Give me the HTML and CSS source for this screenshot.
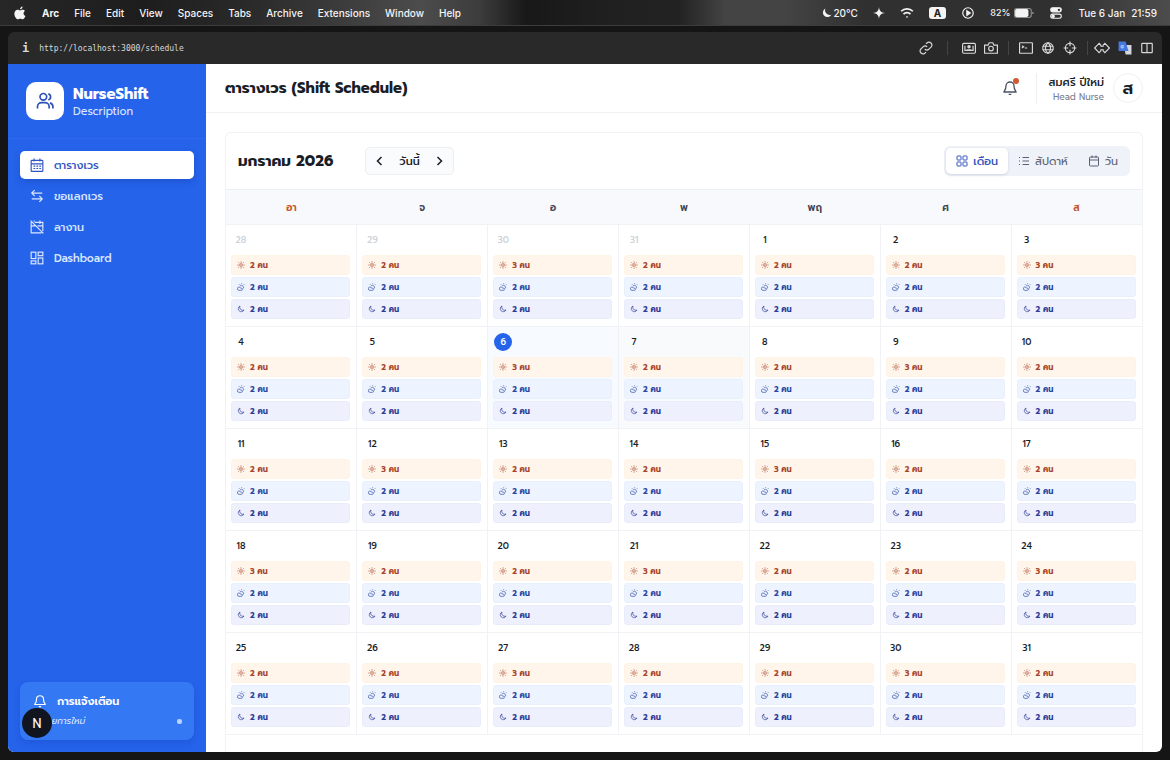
FILE: index.html
```
<!DOCTYPE html>
<html lang="th">
<head>
  <meta charset="UTF-8">
  <meta name="viewport" content="width=device-width, initial-scale=1.0">
  <title>NurseShift</title>
  <link rel="stylesheet" href="styles.css">
</head>
<body>
  <!-- icon set -->
  <svg class="sprite" aria-hidden="true">
    <symbol id="i-users" viewBox="0 0 24 24"><circle cx="10" cy="7" r="4"/><path d="M3 21v-2a5 5 0 0 1 5-5h4a5 5 0 0 1 5 5v2M16 3.2a4 4 0 0 1 0 7.6M21.500 21v-2a5 5 0 0 0-3.500-4.800"/></symbol>
    <symbol id="i-calendar" viewBox="0 0 24 24"><rect x="2" y="4" width="20" height="19" rx="1"/><path d="M2 10h20M7 1v5M17 1v5M6 14h3M11 14h3M16 14h3M6 18h3M11 18h3M16 18h3"/></symbol>
    <symbol id="i-swap" viewBox="0 0 24 24"><path d="M21 7H3M8 2L3 7l5 5M3 17h18M16 12l5 5-5 5"/></symbol>
    <symbol id="i-off" viewBox="0 0 24 24"><path d="M8 4h14v15M2 4v18h18M1 1l22 22M13 10h9M17 1v6M7 1v2M2 10h7"/></symbol>
    <symbol id="i-grid" viewBox="0 0 24 24"><rect x="2" y="2" width="8" height="8" rx="1"/><rect x="14" y="2" width="8" height="8" rx="1"/><rect x="2" y="14" width="8" height="8" rx="1"/><rect x="14" y="14" width="8" height="8" rx="1"/></symbol>
    <symbol id="i-dash" viewBox="0 0 24 24"><rect x="2" y="2" width="8" height="11"/><rect x="14" y="2" width="8" height="6"/><rect x="2" y="17" width="8" height="5"/><rect x="14" y="12" width="8" height="10"/></symbol>
    <symbol id="i-bell" viewBox="0 0 24 24"><path d="M6 9a6 6 0 0 1 12 0c0 6 3 7 3 9H3c0-2 3-3 3-9zM10 21.500h4"/></symbol>
    <symbol id="i-list" viewBox="0 0 24 24"><path d="M9 5h13M9 12h13M9 19h13M2 5h2M2 12h2M2 19h2"/></symbol>
    <symbol id="i-day" viewBox="0 0 24 24"><rect x="3" y="4" width="18" height="18" rx="2"/><path d="M3 10h18M8 1v5M16 1v5"/></symbol>
    <symbol id="i-left" viewBox="0 0 24 24"><path d="M15 4l-8 8 8 8"/></symbol>
    <symbol id="i-right" viewBox="0 0 24 24"><path d="M9 4l8 8-8 8"/></symbol>
    <symbol id="i-sun" viewBox="0 0 24 24"><circle cx="12" cy="12" r="4"/><path d="M12 1v4M12 19v4M1 12h4M19 12h4M4 4l3 3M17 17l3 3M4 20l3-3M17 7l3-3"/></symbol>
    <symbol id="i-cloud" viewBox="0 0 24 24"><path d="M6 22a5 5 0 1 1 4.800-6.500H13a3.200 3.200 0 0 1 0 6.500zM9 9a6 6 0 1 1 9 8M14 1v2M22 4l-2 2M6 4l2 2"/></symbol>
    <symbol id="i-moon" viewBox="0 0 24 24"><path d="M9 3a9 9 0 1 0 12 12A9 9 0 0 1 9 3z"/></symbol>
    <symbol id="i-apple" viewBox="0 0 24 24"><path d="M16.500 1c.1 2.600-2 4.800-4.400 4.700C11.900 3.300 14 1.200 16.500 1zM20.500 8.600c-3.600 2.200-3 7 .8 8.500-1 2.900-2.900 5.700-4.800 5.700-1.600 0-2.100-1-4-1s-2.500 1-4 1C5.300 22.800 2.200 17.200 2.400 12.900c.2-4 2.800-6.400 5.500-6.400 1.800 0 3.100 1.100 4.200 1.100 1 0 2.700-1.300 4.900-1.200 1.400.1 2.700.8 3.500 2.200z"/></symbol>
    <symbol id="i-spark" viewBox="0 0 24 24"><path d="M12 0c.8 8 4 11.200 12 12-8 .8-11.200 4-12 12-.8-8-4-11.200-12-12 8-.8 11.200-4 12-12z"/></symbol>
    <symbol id="i-wifi" viewBox="0 0 24 24"><path d="M2 9a14 14 0 0 1 20 0M6 14a8 8 0 0 1 12 0M11 18.500h2"/></symbol>
    <symbol id="i-play" viewBox="0 0 24 24"><circle cx="12" cy="12" r="9"/><path d="M10 8l6 4-6 4z" fill="currentColor"/></symbol>
    <symbol id="i-battery" viewBox="0 0 36 20"><rect x="1" y="2" width="30" height="16" rx="4" opacity=".5"/><rect x="2" y="3" width="24" height="14" rx="3" fill="currentColor" stroke="none"/><path d="M34 8v4" opacity=".6"/></symbol>
    <symbol id="i-control" viewBox="0 0 24 24"><rect x="3" y="3" width="18" height="7" rx="3" fill="currentColor"/><circle cx="17" cy="6.500" r="2" fill="#333" stroke="none"/><rect x="3" y="14" width="18" height="7" rx="3"/><circle cx="7" cy="17.500" r="2" fill="currentColor"/></symbol>
    <symbol id="i-link" viewBox="0 0 24 24"><path d="M10 14a5 5 0 0 0 7 0l4-4a5 5 0 0 0-7-7l-2 2M14 10a5 5 0 0 0-7 0l-4 4a5 5 0 0 0 7 7l2-2"/></symbol>
    <symbol id="i-card" viewBox="0 0 24 24"><rect x="1" y="4" width="22" height="17" rx="2"/><circle cx="12" cy="10" r="2" fill="currentColor"/><path d="M5 8v8h14V8M8 15h8"/></symbol>
    <symbol id="i-camera" viewBox="0 0 24 24"><path d="M1 7h6l2-4h6l2 4h6v14H1z"/><circle cx="12" cy="13" r="4"/></symbol>
    <symbol id="i-term" viewBox="0 0 24 24"><rect x="1" y="3" width="22" height="18" rx="1"/><path d="M5 8l3 2-3 2M10 12h4"/></symbol>
    <symbol id="i-globe" viewBox="0 0 24 24"><circle cx="12" cy="12" r="9"/><path d="M3 9h18M3 15h18M12 3c-6 5-6 13 0 18M12 3c6 5 6 13 0 18"/></symbol>
    <symbol id="i-target" viewBox="0 0 24 24"><circle cx="12" cy="12" r="8"/><path d="M12 1v8M12 15v8M1 12h8M15 12h8"/></symbol>
    <symbol id="i-code" viewBox="0 0 28 24"><path d="M9 4l-8 8 8 8 3-3v-2h4v2l3 3 8-8-8-8-3 3v2h-4V7z"/></symbol>
    <symbol id="i-split" viewBox="0 0 24 24"><rect x="3" y="4" width="18" height="16" rx="1"/><path d="M12 4v16"/></symbol>
    <symbol id="i-translate" viewBox="0 0 24 24"><path d="M10 7h13v16H13z" fill="#d5d8df" stroke="none"/><path d="M1 1h12l5 16H1z" fill="#4679df" stroke="none"/><path d="M10 8H7a2 2 0 1 0 2 3H7" stroke="#a9c4ff"/></symbol>
  </svg>

  <div class="menubar">
    <svg class="icon solid"><use href="#i-apple"/></svg>
    <b>Arc</b>
    <span>File</span>
    <span>Edit</span>
    <span>View</span>
    <span>Spaces</span>
    <span>Tabs</span>
    <span>Archive</span>
    <span>Extensions</span>
    <span>Window</span>
    <span>Help</span>
    <div class="status">
      <span class="weather"><svg class="icon small solid"><use href="#i-moon"/></svg>20°C</span>
      <svg class="icon small solid"><use href="#i-spark"/></svg>
      <svg class="icon thick"><use href="#i-wifi"/></svg>
      <span class="lang">A</span>
      <svg class="icon"><use href="#i-play"/></svg>
      <span class="power">82%<svg class="icon wide"><use href="#i-battery"/></svg></span>
      <svg class="icon"><use href="#i-control"/></svg>
      <span class="clock"><span>Tue 6 Jan</span><span>21:59</span></span>
    </div>
  </div>

  <div class="window">
    <div class="toolbar">
      <b class="info">i</b>
      <span class="url">http://localhost:3000/schedule</span>
      <div class="tools">
        <div class="tool-group"><svg class="icon"><use href="#i-link"/></svg></div>
        <div class="tool-group"><svg class="icon"><use href="#i-card"/></svg><svg class="icon"><use href="#i-camera"/></svg></div>
        <div class="tool-group"><svg class="icon"><use href="#i-term"/></svg><svg class="icon"><use href="#i-globe"/></svg><svg class="icon"><use href="#i-target"/></svg></div>
        <div class="tool-group"><svg class="icon code"><use href="#i-code"/></svg><svg class="icon"><use href="#i-translate"/></svg><svg class="icon"><use href="#i-split"/></svg></div>
      </div>
    </div>

    <div class="app">
      <aside class="sidebar">
        <div class="brand">
          <div class="logo"><svg class="icon large"><use href="#i-users"/></svg></div>
          <div class="brand-text">
            <div class="brand-name">NurseShift</div>
            <div class="brand-sub">Description</div>
          </div>
        </div>
        <nav>
          <a href="#" class="active"><svg class="icon"><use href="#i-calendar"/></svg>ตารางเวร</a>
          <a href="#"><svg class="icon"><use href="#i-swap"/></svg>ขอแลกเวร</a>
          <a href="#"><svg class="icon"><use href="#i-off"/></svg>ลางาน</a>
          <a href="#"><svg class="icon"><use href="#i-dash"/></svg>Dashboard</a>
        </nav>
        <div class="notice">
          <div class="notice-title"><svg class="icon"><use href="#i-bell"/></svg>การแจ้งเตือน</div>
          <div class="notice-text"><span>รายการใหม่</span><i class="dot"></i></div>
          <button class="dev-badge" aria-label="Dev tools">N</button>
        </div>
      </aside>

      <main>
        <header>
          <h1>ตารางเวร (Shift Schedule)</h1>
          <div class="account">
            <button class="bell" aria-label="การแจ้งเตือน"><svg class="icon"><use href="#i-bell"/></svg></button>
            <div class="user">
              <div class="user-name">สมศรี ปีใหม่</div>
              <div class="user-role">Head Nurse</div>
            </div>
            <div class="avatar">ส</div>
          </div>
        </header>

        <section class="calendar">
          <div class="calendar-head">
            <h2>มกราคม 2026</h2>
            <div class="pager">
              <button aria-label="ก่อนหน้า"><svg class="icon small"><use href="#i-left"/></svg></button>
              <button>วันนี้</button>
              <button aria-label="ถัดไป"><svg class="icon small"><use href="#i-right"/></svg></button>
            </div>
            <div class="views">
              <button class="active"><svg class="icon"><use href="#i-grid"/></svg>เดือน</button>
              <button><svg class="icon"><use href="#i-list"/></svg>สัปดาห์</button>
              <button><svg class="icon"><use href="#i-day"/></svg>วัน</button>
            </div>
          </div>
          <table id="monthTable">
            <thead>
              <tr>
                <th class="weekend">อา</th>
                <th>จ</th>
                <th>อ</th>
                <th>พ</th>
                <th>พฤ</th>
                <th>ศ</th>
                <th class="weekend">ส</th>
              </tr>
            </thead>
            <tbody></tbody>
          </table>
        </section>
      </main>
    </div>
  </div>
  <script src="script.js"></script>
</body>
</html>
```
FILE: styles.css
```
* {
  box-sizing: border-box;
}
body {
  margin: 0;
  height: 100vh;
  display: flex;
  flex-direction: column;
  overflow: hidden;
  background-color: #151515;
  color: #1a1d26;
  font-family: Prompt, Inter, "Noto Sans", "Noto Sans Thai", sans-serif;
  font-size: 11px;
}
button {
  font: inherit;
  color: inherit;
  background: none;
  border: none;
  padding: 0;
  cursor: pointer;
}
a {
  color: inherit;
  text-decoration: none;
}
.sprite {
  position: absolute;
  width: 0;
  height: 0;
}
.icon {
  width: 14px;
  height: 14px;
  flex: none;
  fill: none;
  stroke: currentColor;
  stroke-width: 2;
}
.icon.small {
  width: 12px;
  height: 12px;
}
.icon.large {
  width: 20px;
  height: 20px;
}
.icon.wide {
  width: 20px;
}
.icon.code {
  width: 16px;
}
.icon.thick {
  stroke-width: 3;
}
.icon.solid {
  fill: currentColor;
  stroke: none;
}

/* menu bar */
.menubar {
  display: flex;
  align-items: center;
  gap: 15px;
  height: 26px;
  padding: 0 13px;
  border-bottom: 1px solid #3c3c3c;
  background: linear-gradient(90deg, #272727, #1d1d1d 12%, #2b2b2b 22%, #4c4c4c 36%, #3c3c3c 41%, #181818 45%, #202020 52%, #222 58%, #444 62%, #444 67%, #303030 74%, #303030 90%, #4c4c4c);
  color: #f4f4f4;
  font-family: Inter, sans-serif;
  font-size: 10px;
  font-weight: 500;
}
.menubar b {
  font-weight: 700;
}
.status {
  display: flex;
  align-items: center;
  gap: 15px;
  margin-left: auto;
}
.weather,
.power,
.clock {
  display: flex;
  align-items: center;
}
.power {
  gap: 4px;
  font-size: 9px;
}
.clock {
  gap: 6px;
}
.lang {
  padding: 0 5px;
  border-radius: 3px;
  background-color: #f4f4f4;
  color: #222;
  font-weight: 700;
}

/* browser window */
.window {
  flex: 1;
  min-height: 0;
  display: flex;
  flex-direction: column;
  margin: 6px 8px 8px;
  border-radius: 6px;
  overflow: hidden;
}
.toolbar {
  display: flex;
  align-items: center;
  gap: 10px;
  height: 32px;
  padding: 0 8px 0 14px;
  background-color: #292929;
  color: #d8d8d8;
  font-family: "DejaVu Sans Mono", monospace;
  font-size: 8px;
}
.info {
  font-size: 12px;
}
.tools,
.tool-group {
  display: flex;
  align-items: center;
}
.tools {
  margin-left: auto;
}
.tool-group {
  gap: 8px;
  padding: 0 10px 0 14px;
  border-right: 1px solid #444;
}
.tool-group:first-child {
  padding-right: 14px;
}
.tool-group:nth-child(3) {
  padding-left: 10px;
}
.tool-group:last-child {
  padding: 0 0 0 6px;
  border-right: none;
}
.app {
  flex: 1;
  min-height: 0;
  display: flex;
  background-color: #fff;
}

/* sidebar */
.sidebar {
  width: 198px;
  flex: none;
  display: flex;
  flex-direction: column;
  background-color: #2563eb;
  color: #dbe7ff;
}
.brand {
  display: flex;
  align-items: center;
  gap: 9px;
  height: 75px;
  padding: 0 18px;
  border-bottom: 1px solid #3269ec;
}
.logo {
  display: flex;
  align-items: center;
  justify-content: center;
  width: 38px;
  height: 38px;
  border-radius: 10px;
  background-color: #fff;
  color: #2c4fb8;
}
.brand-text {
  padding-top: 2px;
}
.brand-name {
  color: #fff;
  font-size: 15px;
  font-weight: 700;
  line-height: 20px;
}
.brand-sub {
  font-size: 11px;
  line-height: 16px;
}
nav {
  display: flex;
  flex-direction: column;
  gap: 3px;
  padding: 12px;
}
nav a {
  display: flex;
  align-items: center;
  gap: 10px;
  height: 28px;
  padding: 0 10px;
  border-radius: 5px;
  font-weight: 500;
}
nav a.active {
  background-color: #fff;
  color: #2f55c4;
  box-shadow: 0 3px 6px rgba(20, 50, 150, 0.3);
}
.notice {
  position: relative;
  margin: auto 12px 12px;
  height: 58px;
  padding: 10px 12px 8px 13px;
  border-radius: 8px;
  background-color: #3478f4;
  box-shadow: 0 3px 6px rgba(20, 50, 150, 0.2);
}
.notice-title {
  display: flex;
  align-items: center;
  gap: 10px;
  height: 18px;
  color: #fff;
  font-weight: 600;
}
.notice-text {
  display: flex;
  align-items: center;
  justify-content: space-between;
  height: 22px;
  padding-left: 10px;
  font-size: 9px;
  font-style: italic;
}
.dot {
  width: 5px;
  height: 5px;
  border-radius: 2px;
  background-color: #b9d3ff;
}
.dev-badge {
  position: absolute;
  left: 2px;
  bottom: 2px;
  width: 30px;
  height: 30px;
  border-radius: 50%;
  background-color: #10151f;
  color: #fff;
  font-size: 13px;
}

/* page header */
main {
  flex: 1;
  min-width: 0;
  display: flex;
  flex-direction: column;
}
header {
  display: flex;
  align-items: center;
  justify-content: space-between;
  height: 49px;
  flex: none;
  padding: 0 19px;
  border-bottom: 1px solid #f0f1f4;
}
h1 {
  margin: 0;
  font-size: 15px;
  font-weight: 700;
}
.account {
  display: flex;
  align-items: center;
}
.bell {
  position: relative;
  display: flex;
  padding-right: 18px;
  color: #4b5263;
}
.bell .icon {
  width: 16px;
  height: 16px;
}
.bell::after {
  content: "";
  position: absolute;
  top: -2px;
  right: 17px;
  width: 6px;
  height: 6px;
  border-radius: 50%;
  background-color: #cf5b33;
}
.user {
  padding: 3px 9px 0 12px;
  border-left: 1px solid #eceef2;
  text-align: right;
}
.user-name {
  font-weight: 500;
  line-height: 14px;
}
.user-role {
  color: #7b8190;
  font-size: 9px;
  line-height: 14px;
}
.avatar {
  width: 30px;
  height: 30px;
  border: 1px solid #eef0f3;
  border-radius: 50%;
  font-size: 17px;
  font-weight: 600;
  line-height: 28px;
  text-align: center;
}

/* calendar */
.calendar {
  flex: 1;
  min-height: 0;
  margin: 19px 19px 0;
  border: 1px solid #f0f2f5;
  border-bottom: none;
  border-radius: 6px 6px 0 0;
  overflow: hidden;
}
.calendar-head {
  display: flex;
  align-items: center;
  height: 56px;
  padding: 0 12px;
}
h2 {
  margin: 0 32px 0 0;
  font-size: 15px;
  font-weight: 700;
}
.pager {
  display: flex;
  align-items: center;
  gap: 13px;
  height: 28px;
  padding: 0 8px;
  border: 1px solid #eceef2;
  border-radius: 5px;
  background-color: #fafbfc;
  font-weight: 500;
}
.pager button {
  display: flex;
}
.pager .icon {
  stroke-width: 3;
}
.views {
  display: flex;
  height: 30px;
  margin-left: auto;
  padding: 2px;
  border-radius: 6px;
  background-color: #eff2f8;
  color: #596173;
}
.views button {
  display: flex;
  align-items: center;
  gap: 5px;
  padding: 0 10px;
  border-radius: 5px;
}
.views button.active {
  background-color: #fff;
  color: #3254bd;
  font-weight: 500;
  box-shadow: 0 1px 3px rgba(30, 40, 80, 0.15);
}
.views .icon {
  width: 12px;
  height: 12px;
}
table {
  width: 100%;
  table-layout: fixed;
  border-collapse: collapse;
}
th {
  height: 35px;
  padding: 0;
  border-top: 1px solid #eceff4;
  background-color: #f7f9fc;
  color: #3d4454;
  font-size: 10px;
  font-weight: 600;
}
th.weekend {
  color: #c5532d;
}
td {
  height: 102px;
  padding: 6px 6px 4px 5px;
  border: 1px solid #f0f2f6;
  vertical-align: top;
}
th:first-child,
td:first-child {
  border-left: none;
}
th:last-child,
td:last-child {
  border-right: none;
}
td.today {
  background-color: #f7fbff;
}
td.hover {
  background-color: #f9fafc;
}
.day {
  display: block;
  width: 18px;
  height: 18px;
  margin: 0 1px 6px;
  border-radius: 50%;
  font-size: 9px;
  font-weight: 500;
  line-height: 18px;
  text-align: center;
}
.muted .day {
  color: #cdd1d9;
}
.today .day {
  background-color: #2563eb;
  color: #fff;
}
.shift {
  display: flex;
  align-items: center;
  gap: 5px;
  height: 20px;
  margin-bottom: 2px;
  padding: 0 5px;
  border: 1px solid;
  border-radius: 3px;
  font-size: 8px;
  font-weight: 700;
}
.shift:last-child {
  margin-bottom: 0;
}
.shift .icon {
  width: 8px;
  height: 8px;
}
.morning {
  border-color: #fff3e6;
  background-color: #fff5eb;
  color: #a8452b;
}
.afternoon {
  border-color: #e8f0fc;
  background-color: #eef4ff;
  color: #2d479f;
}
.night {
  border-color: #e9ecfb;
  background-color: #eef0fd;
  color: #2e3d96;
}
```
FILE: script.js
```
const tbody = document.querySelector('#monthTable tbody');
const today = 6;

function shiftRow(type, icon, count) {
  return `<div class="shift ${type}"><svg class="icon"><use href="#${icon}"/></svg>${count} คน</div>`;
}

// The grid starts on Sunday 28 December
for (let week = 0; week < 5; week++) {
  const row = document.createElement('tr');
  for (let i = 0; i < 7; i++) {
    const offset = week * 7 + i - 3;
    const day = offset > 0 ? offset : offset + 31;
    const cell = document.createElement('td');
    if (offset <= 0) cell.className = 'muted';
    if (offset === today) cell.className = 'today';
    if (offset === today + 1) cell.className = 'hover';
    cell.innerHTML = `<span class="day">${day}</span>` +
      shiftRow('morning', 'i-sun', day % 3 === 0 ? 3 : 2) +
      shiftRow('afternoon', 'i-cloud', 2) +
      shiftRow('night', 'i-moon', 2);
    row.appendChild(cell);
  }
  tbody.appendChild(row);
}
```
